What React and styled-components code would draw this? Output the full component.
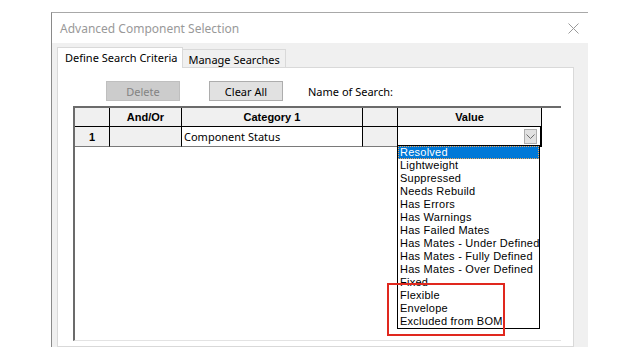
import React from 'react';
import styled, { createGlobalStyle } from 'styled-components';

const statuses = [
  'Resolved',
  'Lightweight',
  'Suppressed',
  'Needs Rebuild',
  'Has Errors',
  'Has Warnings',
  'Has Failed Mates',
  'Has Mates - Under Defined',
  'Has Mates - Fully Defined',
  'Has Mates - Over Defined',
  'Fixed',
  'Flexible',
  'Envelope',
  'Excluded from BOM',
];

const App = () => {
  return (
    <Page>
      <GlobalStyle />
      <Dialog>
        <TitleBar>
          <span>Advanced Component Selection</span>
          <svg width="11" height="11" viewBox="0 0 11 11">
            <path d="M0.5 0.5 L10.5 10.5 M10.5 0.5 L0.5 10.5" stroke="#9a9a9a" strokeWidth="1" />
          </svg>
        </TitleBar>
        <Body>
          <TabRow>
            <Tab $active>Define Search Criteria</Tab>
            <Tab>Manage Searches</Tab>
          </TabRow>
          <Panel>
            <Toolbar>
              <Button disabled>Delete</Button>
              <Button $gap>Clear All</Button>
              <Label>Name of Search:</Label>
            </Toolbar>
            <Grid>
              <Cells>
                <HeadCell />
                <HeadCell>And/Or</HeadCell>
                <HeadCell>Category 1</HeadCell>
                <HeadCell />
                <HeadCell>Value</HeadCell>
                <RowCell $gray $bold $center>1</RowCell>
                <RowCell $gray />
                <RowCell>Component Status</RowCell>
                <RowCell $gray />
                <ComboCell>
                  <ArrowButton>
                    <svg width="9" height="6" viewBox="0 0 9 6">
                      <path d="M0.5 0.5 L4.5 4.5 L8.5 0.5" fill="none" stroke="#6d6d6d" strokeWidth="1" />
                    </svg>
                  </ArrowButton>
                  <DropList>
                    {statuses.map((s, i) => (
                      <Option key={s} $selected={i === 0}>
                        {s}
                      </Option>
                    ))}
                  </DropList>
                </ComboCell>
              </Cells>
            </Grid>
          </Panel>
        </Body>
      </Dialog>
      <Highlight />
    </Page>
  );
};

const GlobalStyle = createGlobalStyle`
  body {
    margin: 0;
    background: #fff;
    font-family: "Noto Sans", "Liberation Sans", sans-serif;
  }
`;

const Page = styled.div`
  position: relative;
  height: 360px;
  padding: 12px 0 0 51px;
  box-sizing: border-box;
`;

const Dialog = styled.div`
  width: 537px;
  height: 335px;
  box-sizing: border-box;
  border-left: 1px solid #8a8a8a;
  border-top: 1px solid #a8a8a8;
  background: #f0f0f0;
  display: flex;
  flex-direction: column;
  overflow: hidden;
`;

const TitleBar = styled.div`
  height: 30px;
  flex: none;
  background: #fff;
  display: flex;
  align-items: center;
  justify-content: space-between;
  padding: 0 9px 0 8px;
  font-size: 12px;
  color: #999;
`;

const Body = styled.div`
  flex: 1;
  display: flex;
  flex-direction: column;
  padding: 5px 14px 0 5px;
  min-height: 0;
`;

const TabRow = styled.div`
  display: flex;
  align-items: flex-end;
  height: 20px;
  margin-bottom: -1px;
  position: relative;
  z-index: 1;
`;

const Tab = styled.div`
  box-sizing: border-box;
  border: 1px solid #d9d9d9;
  border-bottom: none;
  font-size: 11px;
  color: #000;
  display: flex;
  align-items: center;
  height: ${(p) => (p.$active ? '21px' : '18px')};
  margin-bottom: ${(p) => (p.$active ? '0' : '1px')};
  background: ${(p) => (p.$active ? '#fff' : '#f0f0f0')};
  padding: ${(p) => (p.$active ? '0 5px 2px 7px' : '2px 5px 0 5px')};
  ${(p) => !p.$active && 'border-left: none;'}
`;

const Panel = styled.div`
  flex: 1;
  background: #fff;
  border: 1px solid #d9d9d9;
  padding: 13px 12px 0 15px;
  display: flex;
  flex-direction: column;
`;

const Toolbar = styled.div`
  display: flex;
  align-items: center;
  height: 20px;
  padding-left: 33px;
`;

const Button = styled.button`
  width: 74px;
  height: 20px;
  box-sizing: border-box;
  font-family: "Noto Sans", "Liberation Sans", sans-serif;
  font-size: 11px;
  padding: 0;
  margin-left: ${(p) => (p.$gap ? '29px' : '0')};
  background: #e1e1e1;
  border: 1px solid #adadad;
  color: #000;
  &:disabled {
    background: #cccccc;
    border-color: #bfbfbf;
    color: #838383;
  }
`;

const Label = styled.span`
  font-size: 11px;
  margin-left: 25px;
  color: #000;
`;

const Grid = styled.div`
  margin-top: 5px;
  height: 235px;
  box-sizing: border-box;
  border-top: 2px solid #6b6b6b;
  border-left: 2px solid #6b6b6b;
  border-bottom: 1px solid #e3e3e3;
`;

const Cells = styled.div`
  display: grid;
  grid-template-columns: 35px 72px 181px 35px 144px;
  grid-template-rows: 19px 20px;
`;

const HeadCell = styled.div`
  box-sizing: border-box;
  background: #f0f0f0;
  border-right: 1px solid #000;
  border-bottom: 1px solid #000;
  font-family: "Liberation Sans", Arial, sans-serif;
  font-weight: bold;
  font-size: 11px;
  display: flex;
  align-items: center;
  justify-content: center;
`;

const RowCell = styled.div`
  box-sizing: border-box;
  background: ${(p) => (p.$gray ? '#f0f0f0' : '#fff')};
  border-right: 1px solid #000;
  border-bottom: 1px solid #7a7a7a;
  font-family: ${(p) => (p.$bold ? '"Liberation Sans", Arial' : '"Noto Sans"')}, sans-serif;
  font-weight: ${(p) => (p.$bold ? 'bold' : 'normal')};
  font-size: 11px;
  display: flex;
  align-items: center;
  justify-content: ${(p) => (p.$center ? 'center' : 'flex-start')};
  padding-left: ${(p) => (p.$center ? '0' : '2px')};
`;

const ComboCell = styled.div`
  position: relative;
  box-sizing: border-box;
  background: #fff;
  border: 1px solid #000;
  border-right-width: 2px;
  border-bottom-width: 2px;
  margin: -1px 0 0 -1px;
  display: flex;
  align-items: center;
  justify-content: flex-end;
  padding-right: 3px;
`;

const ArrowButton = styled.div`
  width: 13px;
  height: 15px;
  box-sizing: border-box;
  background: #e1e1e1;
  border: 1px solid #adadad;
  display: flex;
  align-items: center;
  justify-content: center;
  padding-top: 2px;
`;

const DropList = styled.div`
  position: absolute;
  top: 100%;
  left: -1px;
  width: 143px;
  box-sizing: border-box;
  background: #fff;
  border: 1px solid #000;
  z-index: 2;
`;

const Option = styled.div`
  height: 13px;
  line-height: 13px;
  font-family: "Liberation Sans", Arial, sans-serif;
  font-size: 11px;
  letter-spacing: 0.25px;
  padding-left: 2px;
  white-space: nowrap;
  overflow: hidden;
  box-sizing: border-box;
  color: ${(p) => (p.$selected ? '#fff' : '#000')};
  background: ${(p) => (p.$selected ? '#0078d7' : 'transparent')};
  outline: ${(p) => (p.$selected ? '1px dotted #f2a65a' : 'none')};
  outline-offset: -1px;
`;

const Highlight = styled.div`
  position: absolute;
  left: 387px;
  top: 283px;
  width: 118px;
  height: 53px;
  box-sizing: border-box;
  border: 2px solid #e0281e;
  pointer-events: none;
  z-index: 5;
`;

export default App;
